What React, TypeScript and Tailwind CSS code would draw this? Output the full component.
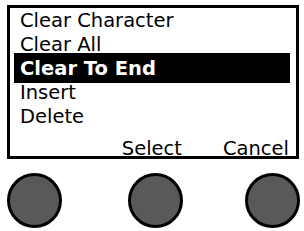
const items = ['Clear Character', 'Clear All', 'Clear To End', 'Insert', 'Delete']
const selected = 2

export default function App() {
  return (
    <div
      className="w-[304px] h-[231px] bg-white overflow-hidden"
      style={{ fontFamily: '"DejaVu Sans", Verdana, sans-serif' }}
    >
      {/* display */}
      <div className="ml-[7px] mt-[5px] w-[292px] h-[154px] border-[3px] border-black flex flex-col text-[19.5px] text-black">
        <div className="pt-[1px] flex flex-col">
          {items.map((item, i) =>
            i === selected ? (
              <div
                key={item}
                className="ml-[4px] mr-[6px] -mt-[4px] -mb-[2px] pt-[4px] pb-[2px] pl-[6px] bg-black text-white font-bold leading-[24px] relative"
              >
                {item}
              </div>
            ) : (
              <div key={item} className="pl-[10px] leading-[24px]">
                {item}
              </div>
            ),
          )}
        </div>
        <div className="mt-[8px] ml-[5px] mr-[5px] h-[2px] bg-[#5a5a5a]" />
        <div className="flex justify-end gap-[41px] pr-[7px] leading-[18px] mt-[3px]">
          <span>Select</span>
          <span>Cancel</span>
        </div>
      </div>

      {/* buttons */}
      <div className="mt-[14px] ml-[7px] w-[293px] flex justify-between">
        <div className="w-[55px] h-[55px] rounded-full bg-[#595959] border-[3px] border-black" />
        <div className="w-[55px] h-[55px] rounded-full bg-[#595959] border-[3px] border-black ml-[4px]" />
        <div className="w-[55px] h-[55px] rounded-full bg-[#595959] border-[3px] border-black" />
      </div>
    </div>
  )
}
